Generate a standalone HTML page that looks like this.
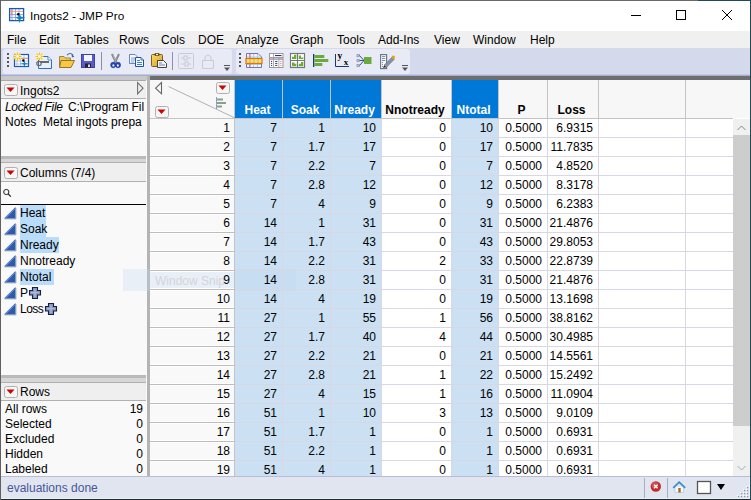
<!DOCTYPE html>
<html><head><meta charset="utf-8">
<style>
*{margin:0;padding:0;box-sizing:border-box}
html,body{width:751px;height:500px;overflow:hidden;background:#fff}
body{position:relative;font-family:"Liberation Sans",sans-serif;font-size:12px;color:#000}
.a{position:absolute}
.t{position:absolute;white-space:nowrap;line-height:12px;font-size:12px}
.r{text-align:right}
.b{font-weight:bold}
</style></head><body>

<div class="a" style="left:0;top:0;width:698px;height:1px;background:#6a6a6a"></div><div class="a" style="left:698px;top:0;width:53px;height:1px;background:#1e4a58"></div>
<div class="t" style="left:30px;top:10px;font-size:11.8px">Ingots2 - JMP Pro</div>
<div class="a" style="left:1px;top:31px;width:749px;height:17px;background:#f0f0f0"></div>
<div class="t" style="left:7px;top:34px">File</div>
<div class="t" style="left:39px;top:34px">Edit</div>
<div class="t" style="left:74px;top:34px">Tables</div>
<div class="t" style="left:119px;top:34px">Rows</div>
<div class="t" style="left:161px;top:34px">Cols</div>
<div class="t" style="left:198px;top:34px">DOE</div>
<div class="t" style="left:236px;top:34px">Analyze</div>
<div class="t" style="left:290px;top:34px">Graph</div>
<div class="t" style="left:337px;top:34px">Tools</div>
<div class="t" style="left:378px;top:34px">Add-Ins</div>
<div class="t" style="left:434px;top:34px">View</div>
<div class="t" style="left:473px;top:34px">Window</div>
<div class="t" style="left:530px;top:34px">Help</div>
<div class="a" style="left:1px;top:48px;width:749px;height:28px;background:#d4d9ec"></div>
<div class="a" style="left:1px;top:74px;width:749px;height:1px;background:#c4c9e4"></div>
<div class="a" style="left:1px;top:75px;width:749px;height:1px;background:#a4acd6"></div>
<div class="a" style="left:3px;top:49px;width:229px;height:25px;background:#e8ebf6;border-radius:3px"></div>
<div class="a" style="left:236px;top:49px;width:174px;height:25px;background:#e8ebf6;border-radius:3px"></div>
<div class="a" style="left:1px;top:76px;width:146px;height:4px;background:#c8c8c8"></div>
<div class="a" style="left:150px;top:76px;width:600px;height:4px;background:#6e6e6e"></div>
<div class="a" style="left:147px;top:76px;width:3px;height:401px;background:#b4b4b4"></div>
<div class="a" style="left:1px;top:80px;width:146px;height:397px;background:#f9f9f9"></div>
<div class="a" style="left:0;top:0;width:146px;height:500px;overflow:hidden">
<div class="a" style="left:1px;top:80px;width:146px;height:1px;background:#a8a8a8"></div>
<div class="a" style="left:1px;top:81px;width:146px;height:18px;background:#efefef;border-bottom:1px solid #b0b0b0;border-right:1px solid #b0b0b0"></div>
<div class="t" style="left:20px;top:85px">Ingots2</div>
<div class="t" style="left:5px;top:101px;letter-spacing:-0.35px"><i>Locked File</i></div>
<div class="t" style="left:68px;top:101px;letter-spacing:-0.1px">C:\Program Fil</div>
<div class="t" style="left:5px;top:116px">Notes</div>
<div class="t" style="left:43px;top:116px">Metal ingots prepa</div>
<div class="a" style="left:1px;top:156px;width:146px;height:7px;background:#d6d6d6;border-top:3px solid #bababa;border-bottom:1px solid #b0b0b0"></div>
<div class="a" style="left:1px;top:163px;width:146px;height:19px;background:#efefef;border-bottom:1px solid #b0b0b0;border-right:1px solid #b0b0b0"></div>
<div class="t" style="left:20px;top:167px">Columns (7/4)</div>
<div class="a" style="left:1px;top:204px;width:146px;height:1px;background:#000"></div>
<div class="a" style="left:20px;top:205px;width:26px;height:16px;background:#b9dcfa"></div>
<div class="t" style="left:20px;top:207px;letter-spacing:0">Heat</div>
<div class="a" style="left:20px;top:221px;width:26px;height:16px;background:#b9dcfa"></div>
<div class="t" style="left:20px;top:223px;letter-spacing:0">Soak</div>
<div class="a" style="left:20px;top:237px;width:39px;height:16px;background:#b9dcfa"></div>
<div class="t" style="left:20px;top:239px;letter-spacing:0">Nready</div>
<div class="t" style="left:20px;top:255px;letter-spacing:0">Nnotready</div>
<div class="a" style="left:20px;top:269px;width:34px;height:16px;background:#b9dcfa"></div>
<div class="t" style="left:20px;top:271px;letter-spacing:0">Ntotal</div>
<div class="t" style="left:20px;top:287px;letter-spacing:-0.5px">P</div>
<div class="t" style="left:20px;top:303px;letter-spacing:-0.5px">Loss</div>
<div class="a" style="left:1px;top:375px;width:146px;height:8px;background:#d6d6d6;border-top:3px solid #bababa;border-bottom:1px solid #b0b0b0"></div>
<div class="a" style="left:1px;top:383px;width:146px;height:18px;background:#efefef;border-bottom:1px solid #b0b0b0;border-right:1px solid #b0b0b0"></div>
<div class="t" style="left:20px;top:386px">Rows</div>
<div class="t" style="left:5px;top:403px">All rows</div>
<div class="t r" style="left:100px;width:43px;top:403px">19</div>
<div class="t" style="left:5px;top:418px">Selected</div>
<div class="t r" style="left:100px;width:43px;top:418px">0</div>
<div class="t" style="left:5px;top:433px">Excluded</div>
<div class="t r" style="left:100px;width:43px;top:433px">0</div>
<div class="t" style="left:5px;top:448px">Hidden</div>
<div class="t r" style="left:100px;width:43px;top:448px">0</div>
<div class="t" style="left:5px;top:463px">Labeled</div>
<div class="t r" style="left:100px;width:43px;top:463px">0</div>
</div>
<div class="a" style="left:150px;top:80px;width:600px;height:397px;background:#fff"></div>
<div class="a" style="left:150px;top:80px;width:600px;height:38px;background:#f7f7f7"></div>
<div class="a" style="left:150px;top:118px;width:85px;height:359px;background:#f9f9f9"></div>
<div class="a" style="left:235px;top:80px;width:47px;height:38px;background:#0078d7"></div>
<div class="a" style="left:235px;top:118px;width:47px;height:359px;background:#cbe0f2"></div>
<div class="t b" style="left:234px;width:47px;text-align:center;top:104px;color:#fff">Heat</div>
<div class="a" style="left:282px;top:80px;width:48px;height:38px;background:#0078d7"></div>
<div class="a" style="left:282px;top:118px;width:48px;height:359px;background:#cbe0f2"></div>
<div class="t b" style="left:281px;width:48px;text-align:center;top:104px;color:#fff">Soak</div>
<div class="a" style="left:330px;top:80px;width:51px;height:38px;background:#0078d7"></div>
<div class="a" style="left:330px;top:118px;width:51px;height:359px;background:#cbe0f2"></div>
<div class="t b" style="left:329px;width:51px;text-align:center;top:104px;color:#fff">Nready</div>
<div class="t b" style="left:380px;width:70px;text-align:center;top:104px;color:#000">Nnotready</div>
<div class="a" style="left:451px;top:80px;width:47px;height:38px;background:#0078d7"></div>
<div class="a" style="left:451px;top:118px;width:47px;height:359px;background:#cbe0f2"></div>
<div class="t b" style="left:450px;width:47px;text-align:center;top:104px;color:#fff">Ntotal</div>
<div class="t b" style="left:497px;width:49px;text-align:center;top:104px;color:#000">P</div>
<div class="t b" style="left:546px;width:51px;text-align:center;top:104px;color:#000">Loss</div>
<div class="a" style="left:123px;top:269px;width:173px;height:22px;background:rgba(190,215,245,0.28)"></div>
<div class="t" style="left:155px;top:275px;color:#d4d4da">Window Snip</div>
<div class="a" style="left:234px;top:80px;width:1px;height:397px;background:#c4c4c4"></div>
<div class="a" style="left:282px;top:80px;width:1px;height:38px;background:#c4c4c4"></div>
<div class="a" style="left:282px;top:118px;width:1px;height:359px;background:#d8d8e4"></div>
<div class="a" style="left:330px;top:80px;width:1px;height:38px;background:#c4c4c4"></div>
<div class="a" style="left:330px;top:118px;width:1px;height:359px;background:#d8d8e4"></div>
<div class="a" style="left:381px;top:80px;width:1px;height:38px;background:#c4c4c4"></div>
<div class="a" style="left:381px;top:118px;width:1px;height:359px;background:#d8d8e4"></div>
<div class="a" style="left:451px;top:80px;width:1px;height:38px;background:#c4c4c4"></div>
<div class="a" style="left:451px;top:118px;width:1px;height:359px;background:#d8d8e4"></div>
<div class="a" style="left:498px;top:80px;width:1px;height:38px;background:#c4c4c4"></div>
<div class="a" style="left:498px;top:118px;width:1px;height:359px;background:#d8d8e4"></div>
<div class="a" style="left:547px;top:80px;width:1px;height:38px;background:#c4c4c4"></div>
<div class="a" style="left:547px;top:118px;width:1px;height:359px;background:#d8d8e4"></div>
<div class="a" style="left:598px;top:80px;width:1px;height:38px;background:#c4c4c4"></div>
<div class="a" style="left:598px;top:118px;width:1px;height:359px;background:#d8d8e4"></div>
<div class="a" style="left:685px;top:80px;width:1px;height:38px;background:#c4c4c4"></div>
<div class="a" style="left:685px;top:118px;width:1px;height:359px;background:#d8d8e4"></div>
<div class="a" style="left:150px;top:118px;width:583px;height:1px;background:#c4c4c4"></div>
<div class="a" style="left:150px;top:136px;width:84px;height:3px;background:#fff"></div>
<div class="a" style="left:150px;top:137px;width:84px;height:1px;background:#bcbcbc"></div>
<div class="a" style="left:235px;top:137px;width:498px;height:1px;background:#d8d8e4"></div>
<div class="a" style="left:150px;top:155px;width:84px;height:3px;background:#fff"></div>
<div class="a" style="left:150px;top:156px;width:84px;height:1px;background:#bcbcbc"></div>
<div class="a" style="left:235px;top:156px;width:498px;height:1px;background:#d8d8e4"></div>
<div class="a" style="left:150px;top:174px;width:84px;height:3px;background:#fff"></div>
<div class="a" style="left:150px;top:175px;width:84px;height:1px;background:#bcbcbc"></div>
<div class="a" style="left:235px;top:175px;width:498px;height:1px;background:#d8d8e4"></div>
<div class="a" style="left:150px;top:193px;width:84px;height:3px;background:#fff"></div>
<div class="a" style="left:150px;top:194px;width:84px;height:1px;background:#bcbcbc"></div>
<div class="a" style="left:235px;top:194px;width:498px;height:1px;background:#d8d8e4"></div>
<div class="a" style="left:150px;top:212px;width:84px;height:3px;background:#fff"></div>
<div class="a" style="left:150px;top:213px;width:84px;height:1px;background:#bcbcbc"></div>
<div class="a" style="left:235px;top:213px;width:498px;height:1px;background:#d8d8e4"></div>
<div class="a" style="left:150px;top:231px;width:84px;height:3px;background:#fff"></div>
<div class="a" style="left:150px;top:232px;width:84px;height:1px;background:#bcbcbc"></div>
<div class="a" style="left:235px;top:232px;width:498px;height:1px;background:#d8d8e4"></div>
<div class="a" style="left:150px;top:250px;width:84px;height:3px;background:#fff"></div>
<div class="a" style="left:150px;top:251px;width:84px;height:1px;background:#bcbcbc"></div>
<div class="a" style="left:235px;top:251px;width:498px;height:1px;background:#d8d8e4"></div>
<div class="a" style="left:150px;top:269px;width:84px;height:3px;background:#fff"></div>
<div class="a" style="left:150px;top:270px;width:84px;height:1px;background:#bcbcbc"></div>
<div class="a" style="left:235px;top:270px;width:498px;height:1px;background:#d8d8e4"></div>
<div class="a" style="left:150px;top:288px;width:84px;height:3px;background:#fff"></div>
<div class="a" style="left:150px;top:289px;width:84px;height:1px;background:#bcbcbc"></div>
<div class="a" style="left:235px;top:289px;width:498px;height:1px;background:#d8d8e4"></div>
<div class="a" style="left:150px;top:307px;width:84px;height:3px;background:#fff"></div>
<div class="a" style="left:150px;top:308px;width:84px;height:1px;background:#bcbcbc"></div>
<div class="a" style="left:235px;top:308px;width:498px;height:1px;background:#d8d8e4"></div>
<div class="a" style="left:150px;top:326px;width:84px;height:3px;background:#fff"></div>
<div class="a" style="left:150px;top:327px;width:84px;height:1px;background:#bcbcbc"></div>
<div class="a" style="left:235px;top:327px;width:498px;height:1px;background:#d8d8e4"></div>
<div class="a" style="left:150px;top:345px;width:84px;height:3px;background:#fff"></div>
<div class="a" style="left:150px;top:346px;width:84px;height:1px;background:#bcbcbc"></div>
<div class="a" style="left:235px;top:346px;width:498px;height:1px;background:#d8d8e4"></div>
<div class="a" style="left:150px;top:364px;width:84px;height:3px;background:#fff"></div>
<div class="a" style="left:150px;top:365px;width:84px;height:1px;background:#bcbcbc"></div>
<div class="a" style="left:235px;top:365px;width:498px;height:1px;background:#d8d8e4"></div>
<div class="a" style="left:150px;top:383px;width:84px;height:3px;background:#fff"></div>
<div class="a" style="left:150px;top:384px;width:84px;height:1px;background:#bcbcbc"></div>
<div class="a" style="left:235px;top:384px;width:498px;height:1px;background:#d8d8e4"></div>
<div class="a" style="left:150px;top:402px;width:84px;height:3px;background:#fff"></div>
<div class="a" style="left:150px;top:403px;width:84px;height:1px;background:#bcbcbc"></div>
<div class="a" style="left:235px;top:403px;width:498px;height:1px;background:#d8d8e4"></div>
<div class="a" style="left:150px;top:421px;width:84px;height:3px;background:#fff"></div>
<div class="a" style="left:150px;top:422px;width:84px;height:1px;background:#bcbcbc"></div>
<div class="a" style="left:235px;top:422px;width:498px;height:1px;background:#d8d8e4"></div>
<div class="a" style="left:150px;top:440px;width:84px;height:3px;background:#fff"></div>
<div class="a" style="left:150px;top:441px;width:84px;height:1px;background:#bcbcbc"></div>
<div class="a" style="left:235px;top:441px;width:498px;height:1px;background:#d8d8e4"></div>
<div class="a" style="left:150px;top:459px;width:84px;height:3px;background:#fff"></div>
<div class="a" style="left:150px;top:460px;width:84px;height:1px;background:#bcbcbc"></div>
<div class="a" style="left:235px;top:460px;width:498px;height:1px;background:#d8d8e4"></div>
<div class="t r" style="left:150px;width:80px;top:122px">1</div>
<div class="t r" style="left:235px;width:42px;top:122px">7</div>
<div class="t r" style="left:282px;width:43px;top:122px">1</div>
<div class="t r" style="left:330px;width:46px;top:122px">10</div>
<div class="t r" style="left:381px;width:65px;top:122px">0</div>
<div class="t r" style="left:451px;width:42px;top:122px">10</div>
<div class="t r" style="left:498px;width:44px;top:122px">0.5000</div>
<div class="t r" style="left:547px;width:46px;top:122px">6.9315</div>
<div class="t r" style="left:150px;width:80px;top:141px">2</div>
<div class="t r" style="left:235px;width:42px;top:141px">7</div>
<div class="t r" style="left:282px;width:43px;top:141px">1.7</div>
<div class="t r" style="left:330px;width:46px;top:141px">17</div>
<div class="t r" style="left:381px;width:65px;top:141px">0</div>
<div class="t r" style="left:451px;width:42px;top:141px">17</div>
<div class="t r" style="left:498px;width:44px;top:141px">0.5000</div>
<div class="t r" style="left:547px;width:46px;top:141px">11.7835</div>
<div class="t r" style="left:150px;width:80px;top:160px">3</div>
<div class="t r" style="left:235px;width:42px;top:160px">7</div>
<div class="t r" style="left:282px;width:43px;top:160px">2.2</div>
<div class="t r" style="left:330px;width:46px;top:160px">7</div>
<div class="t r" style="left:381px;width:65px;top:160px">0</div>
<div class="t r" style="left:451px;width:42px;top:160px">7</div>
<div class="t r" style="left:498px;width:44px;top:160px">0.5000</div>
<div class="t r" style="left:547px;width:46px;top:160px">4.8520</div>
<div class="t r" style="left:150px;width:80px;top:179px">4</div>
<div class="t r" style="left:235px;width:42px;top:179px">7</div>
<div class="t r" style="left:282px;width:43px;top:179px">2.8</div>
<div class="t r" style="left:330px;width:46px;top:179px">12</div>
<div class="t r" style="left:381px;width:65px;top:179px">0</div>
<div class="t r" style="left:451px;width:42px;top:179px">12</div>
<div class="t r" style="left:498px;width:44px;top:179px">0.5000</div>
<div class="t r" style="left:547px;width:46px;top:179px">8.3178</div>
<div class="t r" style="left:150px;width:80px;top:198px">5</div>
<div class="t r" style="left:235px;width:42px;top:198px">7</div>
<div class="t r" style="left:282px;width:43px;top:198px">4</div>
<div class="t r" style="left:330px;width:46px;top:198px">9</div>
<div class="t r" style="left:381px;width:65px;top:198px">0</div>
<div class="t r" style="left:451px;width:42px;top:198px">9</div>
<div class="t r" style="left:498px;width:44px;top:198px">0.5000</div>
<div class="t r" style="left:547px;width:46px;top:198px">6.2383</div>
<div class="t r" style="left:150px;width:80px;top:217px">6</div>
<div class="t r" style="left:235px;width:42px;top:217px">14</div>
<div class="t r" style="left:282px;width:43px;top:217px">1</div>
<div class="t r" style="left:330px;width:46px;top:217px">31</div>
<div class="t r" style="left:381px;width:65px;top:217px">0</div>
<div class="t r" style="left:451px;width:42px;top:217px">31</div>
<div class="t r" style="left:498px;width:44px;top:217px">0.5000</div>
<div class="t r" style="left:547px;width:46px;top:217px">21.4876</div>
<div class="t r" style="left:150px;width:80px;top:236px">7</div>
<div class="t r" style="left:235px;width:42px;top:236px">14</div>
<div class="t r" style="left:282px;width:43px;top:236px">1.7</div>
<div class="t r" style="left:330px;width:46px;top:236px">43</div>
<div class="t r" style="left:381px;width:65px;top:236px">0</div>
<div class="t r" style="left:451px;width:42px;top:236px">43</div>
<div class="t r" style="left:498px;width:44px;top:236px">0.5000</div>
<div class="t r" style="left:547px;width:46px;top:236px">29.8053</div>
<div class="t r" style="left:150px;width:80px;top:255px">8</div>
<div class="t r" style="left:235px;width:42px;top:255px">14</div>
<div class="t r" style="left:282px;width:43px;top:255px">2.2</div>
<div class="t r" style="left:330px;width:46px;top:255px">31</div>
<div class="t r" style="left:381px;width:65px;top:255px">2</div>
<div class="t r" style="left:451px;width:42px;top:255px">33</div>
<div class="t r" style="left:498px;width:44px;top:255px">0.5000</div>
<div class="t r" style="left:547px;width:46px;top:255px">22.8739</div>
<div class="t r" style="left:150px;width:80px;top:274px">9</div>
<div class="t r" style="left:235px;width:42px;top:274px">14</div>
<div class="t r" style="left:282px;width:43px;top:274px">2.8</div>
<div class="t r" style="left:330px;width:46px;top:274px">31</div>
<div class="t r" style="left:381px;width:65px;top:274px">0</div>
<div class="t r" style="left:451px;width:42px;top:274px">31</div>
<div class="t r" style="left:498px;width:44px;top:274px">0.5000</div>
<div class="t r" style="left:547px;width:46px;top:274px">21.4876</div>
<div class="t r" style="left:150px;width:80px;top:293px">10</div>
<div class="t r" style="left:235px;width:42px;top:293px">14</div>
<div class="t r" style="left:282px;width:43px;top:293px">4</div>
<div class="t r" style="left:330px;width:46px;top:293px">19</div>
<div class="t r" style="left:381px;width:65px;top:293px">0</div>
<div class="t r" style="left:451px;width:42px;top:293px">19</div>
<div class="t r" style="left:498px;width:44px;top:293px">0.5000</div>
<div class="t r" style="left:547px;width:46px;top:293px">13.1698</div>
<div class="t r" style="left:150px;width:80px;top:312px">11</div>
<div class="t r" style="left:235px;width:42px;top:312px">27</div>
<div class="t r" style="left:282px;width:43px;top:312px">1</div>
<div class="t r" style="left:330px;width:46px;top:312px">55</div>
<div class="t r" style="left:381px;width:65px;top:312px">1</div>
<div class="t r" style="left:451px;width:42px;top:312px">56</div>
<div class="t r" style="left:498px;width:44px;top:312px">0.5000</div>
<div class="t r" style="left:547px;width:46px;top:312px">38.8162</div>
<div class="t r" style="left:150px;width:80px;top:331px">12</div>
<div class="t r" style="left:235px;width:42px;top:331px">27</div>
<div class="t r" style="left:282px;width:43px;top:331px">1.7</div>
<div class="t r" style="left:330px;width:46px;top:331px">40</div>
<div class="t r" style="left:381px;width:65px;top:331px">4</div>
<div class="t r" style="left:451px;width:42px;top:331px">44</div>
<div class="t r" style="left:498px;width:44px;top:331px">0.5000</div>
<div class="t r" style="left:547px;width:46px;top:331px">30.4985</div>
<div class="t r" style="left:150px;width:80px;top:350px">13</div>
<div class="t r" style="left:235px;width:42px;top:350px">27</div>
<div class="t r" style="left:282px;width:43px;top:350px">2.2</div>
<div class="t r" style="left:330px;width:46px;top:350px">21</div>
<div class="t r" style="left:381px;width:65px;top:350px">0</div>
<div class="t r" style="left:451px;width:42px;top:350px">21</div>
<div class="t r" style="left:498px;width:44px;top:350px">0.5000</div>
<div class="t r" style="left:547px;width:46px;top:350px">14.5561</div>
<div class="t r" style="left:150px;width:80px;top:369px">14</div>
<div class="t r" style="left:235px;width:42px;top:369px">27</div>
<div class="t r" style="left:282px;width:43px;top:369px">2.8</div>
<div class="t r" style="left:330px;width:46px;top:369px">21</div>
<div class="t r" style="left:381px;width:65px;top:369px">1</div>
<div class="t r" style="left:451px;width:42px;top:369px">22</div>
<div class="t r" style="left:498px;width:44px;top:369px">0.5000</div>
<div class="t r" style="left:547px;width:46px;top:369px">15.2492</div>
<div class="t r" style="left:150px;width:80px;top:388px">15</div>
<div class="t r" style="left:235px;width:42px;top:388px">27</div>
<div class="t r" style="left:282px;width:43px;top:388px">4</div>
<div class="t r" style="left:330px;width:46px;top:388px">15</div>
<div class="t r" style="left:381px;width:65px;top:388px">1</div>
<div class="t r" style="left:451px;width:42px;top:388px">16</div>
<div class="t r" style="left:498px;width:44px;top:388px">0.5000</div>
<div class="t r" style="left:547px;width:46px;top:388px">11.0904</div>
<div class="t r" style="left:150px;width:80px;top:407px">16</div>
<div class="t r" style="left:235px;width:42px;top:407px">51</div>
<div class="t r" style="left:282px;width:43px;top:407px">1</div>
<div class="t r" style="left:330px;width:46px;top:407px">10</div>
<div class="t r" style="left:381px;width:65px;top:407px">3</div>
<div class="t r" style="left:451px;width:42px;top:407px">13</div>
<div class="t r" style="left:498px;width:44px;top:407px">0.5000</div>
<div class="t r" style="left:547px;width:46px;top:407px">9.0109</div>
<div class="t r" style="left:150px;width:80px;top:426px">17</div>
<div class="t r" style="left:235px;width:42px;top:426px">51</div>
<div class="t r" style="left:282px;width:43px;top:426px">1.7</div>
<div class="t r" style="left:330px;width:46px;top:426px">1</div>
<div class="t r" style="left:381px;width:65px;top:426px">0</div>
<div class="t r" style="left:451px;width:42px;top:426px">1</div>
<div class="t r" style="left:498px;width:44px;top:426px">0.5000</div>
<div class="t r" style="left:547px;width:46px;top:426px">0.6931</div>
<div class="t r" style="left:150px;width:80px;top:445px">18</div>
<div class="t r" style="left:235px;width:42px;top:445px">51</div>
<div class="t r" style="left:282px;width:43px;top:445px">2.2</div>
<div class="t r" style="left:330px;width:46px;top:445px">1</div>
<div class="t r" style="left:381px;width:65px;top:445px">0</div>
<div class="t r" style="left:451px;width:42px;top:445px">1</div>
<div class="t r" style="left:498px;width:44px;top:445px">0.5000</div>
<div class="t r" style="left:547px;width:46px;top:445px">0.6931</div>
<div class="t r" style="left:150px;width:80px;top:464px">19</div>
<div class="t r" style="left:235px;width:42px;top:464px">51</div>
<div class="t r" style="left:282px;width:43px;top:464px">4</div>
<div class="t r" style="left:330px;width:46px;top:464px">1</div>
<div class="t r" style="left:381px;width:65px;top:464px">0</div>
<div class="t r" style="left:451px;width:42px;top:464px">1</div>
<div class="t r" style="left:498px;width:44px;top:464px">0.5000</div>
<div class="t r" style="left:547px;width:46px;top:464px">0.6931</div>
<div class="a" style="left:733px;top:119px;width:17px;height:358px;background:#f0f0f0"></div>
<div class="a" style="left:733px;top:135px;width:17px;height:291px;background:#cdcdcd"></div>
<div class="a" style="left:1px;top:476px;width:749px;height:1px;background:#b8bcd4"></div>
<div class="a" style="left:1px;top:477px;width:749px;height:22px;background:#e1e5ef"></div>
<div class="t" style="left:7px;top:482px;color:#46569a">evaluations done</div>
<div class="a" style="left:1px;top:498px;width:749px;height:1px;background:#eef0f8"></div>
<div class="a" style="left:749px;top:477px;width:1px;height:22px;background:#eef0f8"></div>
<div class="a" style="left:0;top:499px;width:751px;height:1px;background:#1e2a30"></div>
<div class="a" style="left:0;top:0;width:1px;height:500px;background:#606060"></div>
<div class="a" style="left:750px;top:0;width:1px;height:500px;background:#1e4a52"></div>
<svg class="a" style="left:0;top:0" width="751" height="500" viewBox="0 0 751 500" shape-rendering="geometricPrecision">
<!-- window controls -->
<rect x="631" y="15" width="10" height="1" fill="#000"/>
<rect x="676.5" y="10.5" width="9" height="9" fill="none" stroke="#000" stroke-width="1"/>
<path d="M722 10 L732 20 M732 10 L722 20" stroke="#000" stroke-width="1"/>
<!-- title icon -->
<g>
<rect x="9.6" y="8.6" width="14" height="12" fill="#fff" stroke="#1a5aa6" stroke-width="1.3"/>
<path d="M12 9 V20 M15.5 9 V20 M19 9 V20 M10 14.5 H23 M10 17.5 H23" stroke="#7d9cd0" stroke-width="0.8"/>
<path d="M11.8 9 V15.5" stroke="#f07070" stroke-width="0.9"/>
<path d="M10 11.4 H23" stroke="#f49090" stroke-width="0.9"/>
<circle cx="18.4" cy="14.3" r="1.4" fill="#000"/>
<path d="M19.6 13.5 L20.8 16.6 L25.5 17.8 L20.8 19 L19.6 23.3 L18.4 19 L15.5 17.8 L18.4 16.6 Z" fill="#1a7fc6"/>
</g>

<!-- toolbar 1 grip -->
<g fill="#555">
<rect x="7" y="53" width="2" height="2"/><rect x="7" y="57" width="2" height="2"/><rect x="7" y="61" width="2" height="2"/><rect x="7" y="65" width="2" height="2"/>
<rect x="239" y="53" width="2" height="2"/><rect x="239" y="57" width="2" height="2"/><rect x="239" y="61" width="2" height="2"/><rect x="239" y="65" width="2" height="2"/>
</g>
<!-- new data table -->
<g>
<rect x="14.5" y="54.5" width="14" height="12" fill="#fff" stroke="#1a5aa6" stroke-width="1.2"/>
<path d="M17 55 V66 M20.5 55 V66 M24 55 V66 M15 58 H28 M15 61 H28 M15 64 H28" stroke="#a8bcd8" stroke-width="0.8"/>
<path d="M15 58.5 H28" stroke="#f08080" stroke-width="0.8"/>
<circle cx="23.3" cy="60.5" r="1.2" fill="#000"/>
<path d="M24.5 59 L25.2 63 L29.5 63.8 L25.2 64.6 L24.5 68 L23.8 64.6 L20 63.8 L23.8 63 Z" fill="#1a7fc6"/>
<circle cx="17.5" cy="56.5" r="3.6" fill="#fff6c0"/>
<path d="M17.5 52.5 V60.5 M13.5 56.5 H21.5 M14.6 53.6 L20.4 59.4 M20.4 53.6 L14.6 59.4" stroke="#f0c020" stroke-width="1.1"/>
<circle cx="17.5" cy="56.5" r="1.4" fill="#fffef0"/>
</g>
<!-- new script -->
<g>
<path d="M38.5 56.5 H48 L51.5 60 V68.5 H38.5 Z" fill="#e8f0fa" stroke="#2f6fc0" stroke-width="1"/>
<path d="M48 56.5 V60 H51.5" fill="#fff" stroke="#2f6fc0" stroke-width="0.8"/>
<rect x="40" y="61" width="9" height="2" fill="#6a6a6a"/>
<circle cx="39" cy="63.5" r="2.2" fill="none" stroke="#6a6a6a" stroke-width="1.2"/>
<circle cx="39.5" cy="56.5" r="3.4" fill="#fff6c0"/>
<path d="M39.5 52.5 V60.5 M35.5 56.5 H43.5 M36.6 53.6 L42.4 59.4 M42.4 53.6 L36.6 59.4" stroke="#f0c020" stroke-width="1.1"/>
<circle cx="39.5" cy="56.5" r="1.4" fill="#fffef0"/>
</g>
<!-- open folder -->
<g>
<path d="M59.5 56.5 H64 L65.5 58 H70.5 V66.5 H59.5 Z" fill="#e8c860" stroke="#9a7a30" stroke-width="0.9"/>
<path d="M61 60.5 H74.5 L71 67.5 H59.5 Z" fill="#f8c840" stroke="#8a6a20" stroke-width="0.9"/>
<path d="M67 55 Q70 52 73 55" fill="none" stroke="#3a6aa0" stroke-width="1.1"/>
<path d="M71.5 54 L74.5 56.5 L72 57.5 Z" fill="#3a6aa0"/>
</g>
<!-- save -->
<g>
<rect x="81" y="54" width="14" height="14" fill="#5a5ac8" />
<rect x="81.5" y="54.5" width="13" height="13" fill="none" stroke="#3a3aa0" stroke-width="0.8"/>
<rect x="84" y="55" width="8" height="6" fill="#f4f4ff"/>
<rect x="85" y="63.5" width="6" height="4" fill="#222"/>
<rect x="88" y="64.5" width="2" height="2.5" fill="#ddd"/>
</g>
<rect x="101" y="52" width="1" height="18" fill="#8c90a8"/>
<!-- scissors -->
<g>
<path d="M112 54 L116 62.5" stroke="#7a7a80" stroke-width="2"/>
<path d="M119 54 L115 62.5" stroke="#8a8a90" stroke-width="2"/>
<path d="M112.6 54.5 L115.6 61" stroke="#d8d8dc" stroke-width="0.6"/>
<ellipse cx="113.2" cy="65" rx="2.5" ry="2.8" fill="#2448b8" stroke="#14288a" stroke-width="0.6"/>
<ellipse cx="118" cy="65" rx="2.5" ry="2.8" fill="#2448b8" stroke="#14288a" stroke-width="0.6"/>
<ellipse cx="113.4" cy="65.4" rx="1" ry="1.2" fill="#e8eeff"/>
<ellipse cx="117.8" cy="65.4" rx="1" ry="1.2" fill="#e8eeff"/>
</g>
<!-- copy -->
<g>
<path d="M129.5 54.5 H135 L137.5 57 V63.5 H129.5 Z" fill="#f8faff" stroke="#5a78b0" stroke-width="0.9"/>
<path d="M131 58 H135 M131 60 H136 M131 62 H134" stroke="#5a8ad0" stroke-width="0.8"/>
<path d="M135.5 57.5 H141 L143.5 60 V66.5 H135.5 Z" fill="#f4f8ff" stroke="#2050a8" stroke-width="1"/>
<path d="M141 57.5 V60 H143.5" fill="#c8d8f0" stroke="#2050a8" stroke-width="0.7"/>
<path d="M137 60.5 H140 M137 62.5 H142 M137 64.5 H142" stroke="#3070c8" stroke-width="0.9"/>
</g>
<!-- paste -->
<g>
<defs><linearGradient id="gold" x1="0" y1="0" x2="1" y2="1"><stop offset="0" stop-color="#f8e070"/><stop offset="1" stop-color="#d89a10"/></linearGradient></defs>
<rect x="151.5" y="54.5" width="11" height="12" rx="1" fill="url(#gold)" stroke="#6a5020" stroke-width="0.9"/>
<rect x="154.5" y="53" width="5" height="3" rx="1" fill="#6a5020"/>
<rect x="156" y="53.8" width="2" height="1.4" fill="#f8f0c0"/>
<path d="M157.5 60.5 H163.5 L166.5 63.5 V67.5 H157.5 Z" fill="#eef2fa" stroke="#3a3020" stroke-width="0.9"/>
<path d="M159 63 H162 M159 65 H165" stroke="#506a98" stroke-width="0.8"/>
</g>
<rect x="172" y="52" width="1" height="18" fill="#8c90a8"/>
<!-- disabled column info -->
<g stroke="#c8ccd8" fill="none" stroke-width="1">
<rect x="178.5" y="53.5" width="15" height="15" rx="1"/>
<path d="M181 58 H191 M181 64 H191"/>
<rect x="184" y="56" width="3" height="4" fill="#e9ecf6"/>
<rect x="185" y="62" width="3" height="4" fill="#e9ecf6"/>
</g>
<!-- disabled lock -->
<g stroke="#c8ccd8" fill="none" stroke-width="1.1">
<rect x="202.5" y="60.5" width="11" height="8" rx="0.5"/>
<path d="M205 60.5 V57.5 Q208 52.5 211 57.5 V60.5"/>
</g>
<!-- chevrons -->
<g fill="#555">
<rect x="224" y="65" width="6" height="1"/><path d="M224 67.5 H230 L227 71 Z"/>
<rect x="402" y="65" width="6" height="1"/><path d="M402 67.5 H408 L405 71 Z"/>
</g>
<!-- toolbar 2 icons -->
<g>
<path d="M246.5 53.5 H258 L261.5 57 V67.5 H246.5 Z" fill="#f0f4fc" stroke="#6a7ab8" stroke-width="1"/>
<path d="M249.5 54 V67 M253.5 54 V67 M257.5 54 V67 M247 57 H261 M247 64.5 H261" stroke="#a8c0e0" stroke-width="0.8"/>
<path d="M250 54 V67" stroke="#e05050" stroke-width="0.9"/>
<rect x="246" y="58.5" width="16" height="5" fill="#f4e070" stroke="#e07010" stroke-width="1.2"/>
<path d="M250 59 V63 M254 59 V63 M258 59 V63" stroke="#c0a040" stroke-width="0.7"/>
</g>
<g>
<rect x="269" y="53" width="14.5" height="15" fill="#9a9a9a"/>
<rect x="270" y="54" width="3.2" height="3" fill="#fff"/>
<rect x="274" y="54" width="8.5" height="3" fill="#fff"/>
<rect x="275" y="55" width="6.5" height="1.1" fill="#2a3470"/>
<rect x="270" y="57.8" width="3.2" height="1.3" fill="#e8a0a8"/>
<rect x="274" y="57.8" width="4.5" height="1.3" fill="#b8bcd8"/>
<rect x="279.3" y="57.8" width="3.2" height="1.3" fill="#e8a0a8"/>
<rect x="270" y="59.8" width="3.2" height="7.2" fill="#fff"/>
<rect x="274" y="59.8" width="4.5" height="7.2" fill="#fff"/>
<rect x="279.3" y="59.8" width="3.2" height="7.2" fill="#fff"/>
<path d="M271.6 61.3 V61.5 M271.6 63.3 V63.5 M271.6 65.3 V65.5" stroke="#2a3470" stroke-width="1.2" stroke-linecap="round"/>
<path d="M275.5 61.4 H277 M275.5 63.4 H277 M275.5 65.4 H277" stroke="#2a4a70" stroke-width="1" stroke-linecap="round"/>
<path d="M280.9 61.3 V61.5 M280.9 63.3 V63.5 M280.9 65.3 V65.5" stroke="#e06070" stroke-width="1.1" stroke-linecap="round"/>
</g>
<g>
<rect x="290.5" y="53.5" width="14" height="14" fill="#fff" stroke="#777" stroke-width="1.2"/>
<path d="M297.5 54 V67 M291 60.5 H304" stroke="#777" stroke-width="1.2"/>
<path d="M292 56.8 H294 V54.8 H296.3 V59 H292 Z M298.8 55.5 H301 V57.5 H303.3 V59 H298.8 Z M292 62.5 H294.5 V63.8 H296.3 V66.3 H292 Z M298.8 63.8 H301 V62 H303.3 V66.3 H298.8 Z" fill="#6aae3a"/>
</g>
<g>
<rect x="313" y="54" width="1.3" height="13" fill="#1a3a6a"/>
<rect x="314.3" y="55" width="10" height="3" fill="#6aaa40"/>
<rect x="314.3" y="59" width="14" height="3" fill="#6aaa40"/>
<rect x="314.3" y="63" width="8" height="3" fill="#6aaa40"/>
</g>
<g>
<path d="M335.5 54 V66.5 H349" fill="none" stroke="#1a3a6a" stroke-width="1"/>
<text x="337.6" y="58.8" font-family="Liberation Serif" font-weight="bold" font-size="9.5" fill="#000">y</text>
<text x="343.8" y="65.2" font-family="Liberation Serif" font-weight="bold" font-size="9" fill="#000">x</text>
</g>
<g>
<rect x="357" y="54.5" width="2.2" height="2.2" fill="#c0c8dc" stroke="#8a9ab8" stroke-width="0.8"/>
<rect x="357" y="59.5" width="2.2" height="2.2" fill="#c0c8dc" stroke="#8a9ab8" stroke-width="0.8"/>
<rect x="357" y="64.5" width="2.2" height="2.2" fill="#c0c8dc" stroke="#8a9ab8" stroke-width="0.8"/>
<path d="M359.5 55.5 L364 60.5 M359.5 60.5 H364 M359.5 65.5 L364 60.5" stroke="#2a4a80" stroke-width="0.9"/>
<rect x="364" y="57" width="7.5" height="7" fill="#6aaa40"/>
</g>
<g>
<rect x="380.6" y="54.6" width="6" height="14" fill="#fff" stroke="#6a7a8c" stroke-width="1.2"/>
<path d="M382 56.6 H385.3 M382 58.6 H385.3 M382 60.6 H385.3 M382 62.6 H383 M382 64.6 H383 M382 66.6 H383" stroke="#6a7a8c" stroke-width="0.9"/>
<path d="M384.2 65 L392.2 57 L394.4 59.2 L386.4 67.2 Z" fill="#8494a8" stroke="#5a6070" stroke-width="0.5"/>
<path d="M384.2 65 L386.4 67.2 L383 68 Z" fill="#303030"/>
<path d="M385 65.3 L386 66.3" stroke="#e8b060" stroke-width="1"/>
<circle cx="393.3" cy="57.3" r="1.7" fill="#f09a18"/>
</g>
<!-- left panel dropdown buttons -->
<rect x="4.5" y="84.5" width="13" height="11" rx="2" fill="#f6f6f6" stroke="#b0b0b0" stroke-width="1"/><path d="M6.5 87.5 H14.5 L10.5 92 Z" fill="#d00000"/><rect x="4.5" y="167.5" width="13" height="11" rx="2" fill="#f6f6f6" stroke="#b0b0b0" stroke-width="1"/><path d="M6.5 170.5 H14.5 L10.5 175 Z" fill="#d00000"/><rect x="4.5" y="386.5" width="13" height="11" rx="2" fill="#f6f6f6" stroke="#b0b0b0" stroke-width="1"/><path d="M6.5 389.5 H14.5 L10.5 394 Z" fill="#d00000"/><rect x="216.5" y="82.5" width="13" height="11" rx="2" fill="#f6f6f6" stroke="#b0b0b0" stroke-width="1"/><path d="M218.5 85.5 H226.5 L222.5 90 Z" fill="#d00000"/><rect x="155.5" y="106.5" width="13" height="11" rx="2" fill="#f6f6f6" stroke="#b0b0b0" stroke-width="1"/><path d="M157.5 109.5 H165.5 L161.5 114 Z" fill="#d00000"/><path d="M143 88.2 L137.6 82.6 V93.8 Z" fill="none" stroke="#707070" stroke-width="1.1"/><path d="M155.6 88.2 L161.5 82.6 V93.8 Z" fill="none" stroke="#666" stroke-width="1.1"/><path d="M168.5 86.5 L235 118" stroke="#a0a0a0" stroke-width="0.8"/><rect x="216" y="97" width="1" height="12" fill="#8aa0c8"/><rect x="217" y="98.5" width="6" height="2" fill="#8aa088"/><rect x="217" y="102" width="9" height="2" fill="#8aa088"/><rect x="217" y="105.5" width="5" height="2" fill="#8aa088"/><path d="M4 218.5 L15.5 207 V218.5 Z" fill="#2d5cae"/><path d="M5.8 217.8 L14.8 208.8" stroke="#7fa6ea" stroke-width="0.9"/><path d="M5 219 H16 V208" stroke="#505a70" stroke-width="0.9" fill="none" opacity="0.45"/><path d="M4 234.5 L15.5 223 V234.5 Z" fill="#2d5cae"/><path d="M5.8 233.8 L14.8 224.8" stroke="#7fa6ea" stroke-width="0.9"/><path d="M5 235 H16 V224" stroke="#505a70" stroke-width="0.9" fill="none" opacity="0.45"/><path d="M4 250.5 L15.5 239 V250.5 Z" fill="#2d5cae"/><path d="M5.8 249.8 L14.8 240.8" stroke="#7fa6ea" stroke-width="0.9"/><path d="M5 251 H16 V240" stroke="#505a70" stroke-width="0.9" fill="none" opacity="0.45"/><path d="M4 266.5 L15.5 255 V266.5 Z" fill="#2d5cae"/><path d="M5.8 265.8 L14.8 256.8" stroke="#7fa6ea" stroke-width="0.9"/><path d="M5 267 H16 V256" stroke="#505a70" stroke-width="0.9" fill="none" opacity="0.45"/><path d="M4 282.5 L15.5 271 V282.5 Z" fill="#2d5cae"/><path d="M5.8 281.8 L14.8 272.8" stroke="#7fa6ea" stroke-width="0.9"/><path d="M5 283 H16 V272" stroke="#505a70" stroke-width="0.9" fill="none" opacity="0.45"/><path d="M4 298.5 L15.5 287 V298.5 Z" fill="#2d5cae"/><path d="M5.8 297.8 L14.8 288.8" stroke="#7fa6ea" stroke-width="0.9"/><path d="M5 299 H16 V288" stroke="#505a70" stroke-width="0.9" fill="none" opacity="0.45"/><path d="M4 314.5 L15.5 303 V314.5 Z" fill="#2d5cae"/><path d="M5.8 313.8 L14.8 304.8" stroke="#7fa6ea" stroke-width="0.9"/><path d="M5 315 H16 V304" stroke="#505a70" stroke-width="0.9" fill="none" opacity="0.45"/><path d="M32.5 287.5 H37.5 V290.5 H40.5 V295 H37.5 V298.5 H32.5 V295 H29.5 V290.5 H32.5 Z" fill="#8896b8" stroke="#14204a" stroke-width="1.1"/><path d="M31 292.7 H39 M35 289 V297" stroke="#b8c4dc" stroke-width="1"/><path d="M48.5 303.5 H53.5 V306.5 H56.5 V311 H53.5 V314.5 H48.5 V311 H45.5 V306.5 H48.5 Z" fill="#8896b8" stroke="#14204a" stroke-width="1.1"/><path d="M47 308.7 H55 M51 305 V313" stroke="#b8c4dc" stroke-width="1"/><circle cx="6.3" cy="192" r="2.6" fill="none" stroke="#222" stroke-width="1"/><path d="M8.2 193.9 L10.8 196.6" stroke="#222" stroke-width="1.3"/><rect x="644" y="478" width="1" height="20" fill="#a8acc4"/><rect x="667" y="478" width="1" height="20" fill="#a8acc4"/><circle cx="655.8" cy="486.5" r="5.2" fill="#c42a2a"/><circle cx="655" cy="485.3" r="3.3" fill="#e46a6a" opacity="0.55"/><path d="M654 484.7 L657.6 488.3 M657.6 484.7 L654 488.3" stroke="#fff" stroke-width="1.4"/><path d="M675 487 V492.5 H683.5 V487" fill="#f4f8fc" stroke="#a8d4f0" stroke-width="0.9"/><rect x="678.3" y="488" width="2.4" height="4.5" fill="#a86a10"/><path d="M673.2 487.8 L679.2 482.2 L685.2 487.8" fill="none" stroke="#3a8ccc" stroke-width="1.8"/><rect x="697.5" y="481.5" width="13" height="12" fill="#fff" stroke="#555" stroke-width="1.3"/><path d="M717 484 H725 L721 490 Z" fill="#000"/><rect x="746" y="486" width="1" height="1" fill="#fff"/><rect x="747" y="487" width="1.2" height="1.2" fill="#8890b0"/><rect x="743" y="489" width="1" height="1" fill="#fff"/><rect x="744" y="490" width="1.2" height="1.2" fill="#8890b0"/><rect x="746" y="489" width="1" height="1" fill="#fff"/><rect x="747" y="490" width="1.2" height="1.2" fill="#8890b0"/><rect x="740" y="492" width="1" height="1" fill="#fff"/><rect x="741" y="493" width="1.2" height="1.2" fill="#8890b0"/><rect x="743" y="492" width="1" height="1" fill="#fff"/><rect x="744" y="493" width="1.2" height="1.2" fill="#8890b0"/><rect x="746" y="492" width="1" height="1" fill="#fff"/><rect x="747" y="493" width="1.2" height="1.2" fill="#8890b0"/><rect x="737" y="495" width="1" height="1" fill="#fff"/><rect x="738" y="496" width="1.2" height="1.2" fill="#8890b0"/><rect x="740" y="495" width="1" height="1" fill="#fff"/><rect x="741" y="496" width="1.2" height="1.2" fill="#8890b0"/><rect x="743" y="495" width="1" height="1" fill="#fff"/><rect x="744" y="496" width="1.2" height="1.2" fill="#8890b0"/><rect x="746" y="495" width="1" height="1" fill="#fff"/><rect x="747" y="496" width="1.2" height="1.2" fill="#8890b0"/><path d="M737.5 130 L741.5 126 L745.5 130" fill="none" stroke="#888" stroke-width="1"/><path d="M737.5 466 L741.5 470 L745.5 466" fill="none" stroke="#aaa" stroke-width="1"/>
</svg>
</body></html>
